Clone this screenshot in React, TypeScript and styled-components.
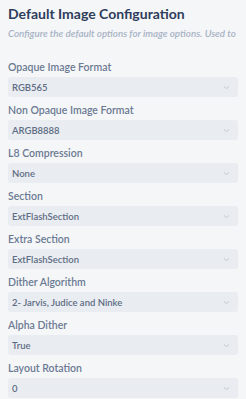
import React from 'react'
import styled, { createGlobalStyle } from 'styled-components'

const GlobalStyle = createGlobalStyle`
  html, body {
    margin: 0;
    padding: 0;
    background-color: #f5f6f8;
  }
  body {
    font-family: Lato, "Open Sans", sans-serif;
  }
`

const PanelStyled = styled.div`
  padding: 5px 8px 0 8px;
  width: 246px;
  box-sizing: border-box;
  overflow: hidden;
`

const TitleStyled = styled.div`
  font-size: 14px;
  font-weight: 700;
  color: #2e3d5c;
  line-height: 17px;
  white-space: nowrap;
`

const SubtitleStyled = styled.div`
  font-size: 9.8px;
  font-style: italic;
  font-weight: 600;
  color: #a7b2c4;
  line-height: 12px;
  margin-top: 5px;
  white-space: nowrap;
`

const FieldListStyled = styled.div`
  display: flex;
  flex-direction: column;
  gap: 6px;
  margin-top: 21px;
`

const FieldStyled = styled.div`
  display: flex;
  flex-direction: column;
  gap: 3px;
`

const LabelStyled = styled.div`
  font-size: 10.5px;
  font-weight: 600;
  color: #6b7a92;
  line-height: 14px;
  white-space: nowrap;
`

const SelectStyled = styled.div`
  height: 20px;
  border-radius: 3px;
  background-color: #e9ecf0;
  display: flex;
  align-items: center;
  justify-content: space-between;
  padding: 0 8px 0 4px;
  font-size: 9.5px;
  font-weight: 600;
  color: #5e6d85;
`

const Chevron = () => (
  <svg width="7" height="5" viewBox="0 0 7 5">
    <path d="M1 1.5 L3.5 3.5 L6 1.5" fill="none" stroke="#c3cad5" strokeWidth="1" />
  </svg>
)

type Field = { label: string, value: string }

const fields: Array<Field> = [
  { label: 'Opaque Image Format', value: 'RGB565' },
  { label: 'Non Opaque Image Format', value: 'ARGB8888' },
  { label: 'L8 Compression', value: 'None' },
  { label: 'Section', value: 'ExtFlashSection' },
  { label: 'Extra Section', value: 'ExtFlashSection' },
  { label: 'Dither Algorithm', value: '2- Jarvis, Judice and Ninke' },
  { label: 'Alpha Dither', value: 'True' },
  { label: 'Layout Rotation', value: '0' }
]

const App = () => (
  <>
    <GlobalStyle />
    <PanelStyled>
      <TitleStyled>Default Image Configuration</TitleStyled>
      <SubtitleStyled>Configure the default options for image options. Used to</SubtitleStyled>
      <FieldListStyled>
        {fields.map(field => (
          <FieldStyled key={field.label}>
            <LabelStyled>{field.label}</LabelStyled>
            <SelectStyled>
              <span>{field.value}</span>
              <Chevron />
            </SelectStyled>
          </FieldStyled>
        ))}
      </FieldListStyled>
    </PanelStyled>
  </>
)

export default App
